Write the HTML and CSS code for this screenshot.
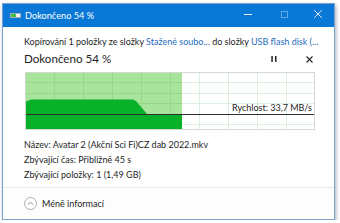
FILE: index.html
```html
<!DOCTYPE html>
<html lang="cs">
<head>
<meta charset="utf-8">
<link rel="stylesheet" href="styles.css">
</head>
<body>
<div class="window">
  <div class="titlebar">
    <svg class="app-icon" width="11" height="5" viewBox="0 0 11 5">
      <rect x="0.5" y="0.5" width="10" height="4" fill="#f2f2f2" stroke="#a3adb8"/>
      <rect x="1" y="1" width="5" height="3" fill="#3cc04a"/>
    </svg>
    <span class="title">Dokončeno 54 %</span>
    <div class="caption-buttons">
      <span class="cap-btn min"><svg width="8" height="8" viewBox="0 0 8 8"><path d="M0 4.5H8" stroke="#fff" stroke-width="1"/></svg></span>
      <span class="cap-btn max"><svg width="7" height="7" viewBox="0 0 7 7"><rect x="0.5" y="0.5" width="6" height="6" fill="none" stroke="#fff"/></svg></span>
      <span class="cap-btn close"><svg width="8" height="8" viewBox="0 0 8 8"><path d="M0.3 0.3L7.7 7.7M7.7 0.3L0.3 7.7" stroke="#fff" stroke-width="0.9"/></svg></span>
    </div>
  </div>
  <div class="content">
    <div class="from-to">Kopírování 1 položky ze složky <span class="link">Stažené soubo...</span> do složky <span class="link">USB flash disk (...</span></div>
    <div class="heading-row">
      <span class="heading">Dokončeno 54 %</span>
      <div class="actions">
        <svg width="6" height="6" viewBox="0 0 6 6"><rect x="0.3" y="0" width="1.5" height="6" fill="#222"/><rect x="4" y="0" width="1.5" height="6" fill="#222"/></svg>
        <svg width="7" height="7" viewBox="0 0 7 7"><path d="M0.5 0.5L6.5 6.5M6.5 0.5L0.5 6.5" stroke="#222" stroke-width="1.1"/></svg>
      </div>
    </div>
    <div class="graph">
      <svg width="290" height="58" viewBox="0 0 290 58">
        <rect x="0" y="0" width="157" height="58" fill="#a8e49c"/>
        <g stroke="#dcefdc" stroke-width="1">
          <path d="M29.5 0V58M58.5 0V58M87.5 0V58M116.5 0V58M145.5 0V58M174.5 0V58M203.5 0V58M232.5 0V58M261.5 0V58"/>
          <path d="M0 10.5H290M0 21.5H290M0 31.5H290M0 52.5H290"/>
        </g>
        <g stroke="#95d889" stroke-width="1">
          <path d="M29.5 0V58M58.5 0V58M87.5 0V58M116.5 0V58M145.5 0V58"/>
          <path d="M0 10.5H157M0 21.5H157M0 31.5H157M0 52.5H157"/>
        </g>
        <path d="M0 30L6 27.5L108 27.5L111 29L122 42L157 42L157 58L0 58Z" fill="#09b02a"/>
        <path d="M0 42.5H290" stroke="#2d2d2d" stroke-width="1"/>
        <rect x="0.5" y="0.5" width="289" height="57" fill="none" stroke="#d2d8d2"/>
      </svg>
      <span class="speed">Rychlost: 33,7 MB/s</span>
    </div>
    <div class="details">
      <div>Název: Avatar 2 (Akční Sci Fi)CZ dab 2022.mkv</div>
      <div>Zbývající čas: Přibližně 45 s</div>
      <div>Zbývající položky: 1 (1,49 GB)</div>
    </div>
  </div>
  <div class="footer">
    <svg width="13" height="13" viewBox="0 0 13 13"><circle cx="6.5" cy="6.5" r="6" fill="#fff" stroke="#9a9a9a" stroke-width="0.8"/><path d="M3.8 7.8L6.5 5.1L9.2 7.8" fill="none" stroke="#707070" stroke-width="0.8"/></svg>
    <span>Méně informací</span>
  </div>
</div>
</body>
</html>
```
FILE: styles.css
```css
* { box-sizing: border-box; }
html, body { margin: 0; padding: 0; background: #ffffff; }
body {
  font-family: Lato, "Liberation Sans", sans-serif;
  color: #1e1e1e;
}
.window {
  margin: 3px 0 0 2px;
  width: 333px;
  height: 217px;
  border: 1px solid #7aa4cd;
  background: #ffffff;
  box-shadow: 1px 2px 4px rgba(60, 80, 110, 0.45);
  display: flex;
  flex-direction: column;
}
.titlebar {
  height: 23px;
  flex: none;
  background: #0a78d6;
  display: flex;
  align-items: center;
  color: #fff;
  padding-left: 7px;
}
.app-icon { display: block; margin-right: 4px; }
.title { font-size: 9.2px; line-height: 12px; }
.caption-buttons { margin-left: auto; display: flex; align-items: center; height: 23px; }
.cap-btn {
  height: 23px;
  display: flex;
  align-items: center;
  justify-content: center;
  padding-bottom: 3px;
}
.cap-btn.min { width: 36px; }
.cap-btn.max { width: 36px; opacity: 0.35; }
.cap-btn.close { width: 32px; }
.cap-btn svg { display: block; }
.content {
  flex: 1;
  padding: 9px 19px 0 21px;
}
.from-to {
  font-size: 9px;
  line-height: 12px;
  white-space: nowrap;
}
.link { color: #1f6cbd; }
.heading-row {
  display: flex;
  align-items: center;
  height: 16px;
  margin-top: 3px;
}
.heading { font-size: 11.6px; line-height: 16px; }
.actions {
  margin-left: auto;
  margin-right: 2px;
  display: flex;
  gap: 29px;
  align-items: center;
}
.actions svg { display: block; }
.graph {
  position: relative;
  margin-top: 5px;
  margin-left: 1px;
  width: 290px;
  height: 58px;
}
.graph svg { display: block; }
.speed {
  position: absolute;
  right: 3px;
  top: 30px;
  font-size: 9px;
  line-height: 11px;
  color: #1e1e1e;
}
.details {
  margin-top: 7px;
  font-size: 9px;
  line-height: 15px;
}
.footer {
  height: 32px;
  flex: none;
  border-top: 1px solid #e8e8e8;
  background: #fdfdfd;
  display: flex;
  align-items: center;
  padding-left: 21px;
  gap: 5px;
  font-size: 9px;
}
.footer svg { display: block; }
```
